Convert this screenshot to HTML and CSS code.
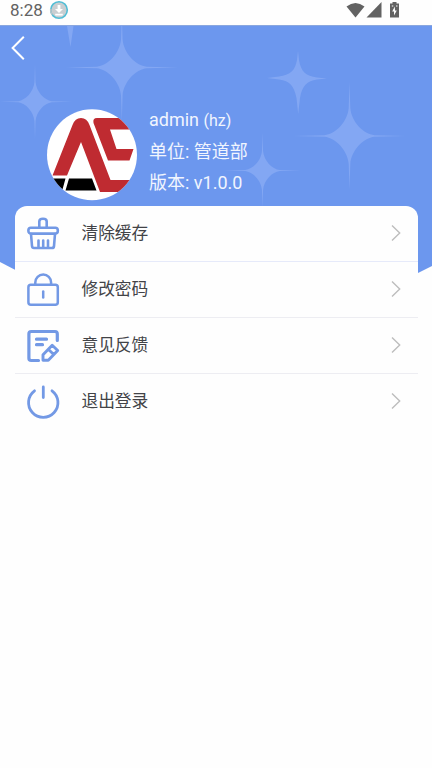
FILE: index.html
```html
<!DOCTYPE html>
<html lang="zh-CN">
<head>
<meta charset="utf-8">
<title>admin</title>
<link rel="stylesheet" href="styles.css">
</head>
<body>
<div class="screen">
  <header class="status">
    <span class="clock">8:28</span>
    <svg class="download" width="20" height="20" viewBox="0 0 20 20"><circle cx="10" cy="10" r="8.3" fill="#c9ced1" stroke="#52bdd5" stroke-width="1.6"/><path d="M3.2 14.8A8.3 8.3 0 0 1 1.7 9" fill="none" stroke="#b9c4c8" stroke-width="1.6"/><path d="M8.6 5h2.8v4h2.6l-4 4-4-4h2.6zM6.2 13.8h7.6v1.6H6.2z" fill="#fff"/></svg>
    <svg class="signals" width="54" height="18" viewBox="0 0 54 18"><g fill="#626262"><path d="M.5 5.600Q9.500-1.400 18.500 5.600L9.500 16.500z"/><path d="M35.500 1v15.500H20.500z"/><path d="M44 2.500h2.500V1h4v1.500H53v14H44z"/></g><path d="M48.800 5.500l-2.600 5h1.800v4l2.800-5H49zM45.800 4.500h1.500v1h-1.500zM50 4.500h1.500v1H50z" fill="#fff"/></svg>
  </header>
  <main class="page">
    <svg class="backdrop" width="432" height="350" viewBox="0 25 432 350">
      <defs>
        <path id="star" d="M0-54L.8-28C2-14 14-2 25-.8L56 0 25 .8C14 2 2 14 .8 28L0 54-.8 28C-2 14-14 2-25 .8L-56 0-25-.8C-14-2-2-14-.8-28z"/>
      </defs>
      <path d="M0 25H432V266L216 374 0 262z" fill="#6c97ee"/>
      <path d="M0 25.500H432" stroke="#8aa7df"/>
      <g fill="#83a7f3">
        <use href="#star" transform="translate(121.800 67.500)"/>
        <use href="#star" transform="translate(35 101.700) scale(.67 .7)"/>
        <use href="#star" transform="translate(349.500 136)"/>
        <use href="#star" transform="translate(262.500 170.500) scale(.69 .7)"/>
        <path d="M298 51L299 60C301 72 306 76 317 77.500L327 78.500 317 79.500C307 81 302 86 300 98L298.200 114 296.500 98C294 86 290 81 279 79.500L267 78 279 76.500C290 75 295 71 297 60z"/>
        <path d="M67 26H73.500L70.500 47z"/>
      </g>
    </svg>
    <svg class="back" width="16" height="26" viewBox="0 0 16 26"><path d="M13.800 1.700L2.600 13 13.800 24.200" fill="none" stroke="#fff" stroke-width="2"/></svg>
    <section class="profile">
      <svg class="avatar" width="90" height="92" viewBox="0 0 90 92">
        <defs><clipPath id="round"><ellipse cx="45" cy="45.800" rx="45" ry="45.500"/></clipPath></defs>
        <g clip-path="url(#round)">
          <path fill="#fff" d="M0 0h90v92H0z"/>
          <path fill="#bf2b31" d="M5.500 66.500L25.500 16Q28 9 34 9Q40 9 42.500 16L63.500 71H90V83H53L34 33 20 66.500z"/>
          <path fill="#bf2b31" d="M50 9H90V20.500H63L69.500 40H86.500L82.500 51.500H61L46.500 14Q45.500 9 50 9z"/>
          <path fill="#000" d="M4 69.500H18.500L15.500 80.500H0V69.500zM22 69.500H45L49.500 81.500H18.500z"/>
        </g>
      </svg>
      <div class="info">
        <div>admin <small>(hz)</small></div>
        <div>单位: 管道部</div>
        <div>版本: v1.0.0</div>
      </div>
    </section>
    <nav class="menu">
      <a class="row">
        <svg class="icon" width="34" height="34" viewBox="0 0 34 34"><g fill="none" stroke="#7399e5" stroke-width="2.600" stroke-linejoin="round" stroke-linecap="round"><path d="M13.300 10.500V4.500Q13.300 1.800 17 1.800T20.700 4.500V10.500"/><rect x="2.400" y="10.800" width="29.400" height="5.800" rx="2.500" fill="#fff"/><path d="M5 17L6 29Q6.200 31 8 31H26Q27.800 31 28 29L29 17M12.500 23.500V29.500M17.200 23.500V29.500M22 23.500V29.500"/></g></svg>
        <span class="label">清除缓存</span>
        <svg class="arrow" width="12" height="18" viewBox="0 0 12 18"><path d="M2 1.500L9.700 9 2 16.500"/></svg>
      </a>
      <a class="row">
        <svg class="icon" width="34" height="34" viewBox="0 0 34 34"><g fill="none" stroke="#7399e5" stroke-width="2.500" stroke-linecap="round"><rect x="2.400" y="11.800" width="29.400" height="20" rx="2.500"/><path d="M9.300 11.500V9.500a7.900 7.900 0 0 1 15.800 0V11.500"/><path d="M17.200 18.500V24.500"/></g></svg>
        <span class="label">修改密码</span>
        <svg class="arrow" width="12" height="18" viewBox="0 0 12 18"><path d="M2 1.500L9.700 9 2 16.500"/></svg>
      </a>
      <a class="row">
        <svg class="icon" width="34" height="34" viewBox="0 0 34 34"><g fill="none" stroke="#7399e5" stroke-width="3.200" stroke-linecap="round" stroke-linejoin="round"><path d="M12.500 31.500H5.200Q2.900 31.500 2.900 29.300V4.800Q2.900 2.500 5.200 2.500H29Q31.300 2.500 31.300 4.800V11.500M10.500 10.200H20.500M10.500 15.700H16.500"/><path d="M17 25.800L26.200 16.300 31.700 21.500 22.300 31.300H17zM22.800 20.800L27.500 25.200" stroke-width="2.900"/></g></svg>
        <span class="label">意见反馈</span>
        <svg class="arrow" width="12" height="18" viewBox="0 0 12 18"><path d="M2 1.500L9.700 9 2 16.500"/></svg>
      </a>
      <a class="row">
        <svg class="icon" width="34" height="34" viewBox="0 0 34 34"><path d="M8.500 5.800A14.700 14.700 0 1 0 26 5.800M17.300 2V12.500" fill="none" stroke="#7399e5" stroke-width="2.800" stroke-linecap="round"/></svg>
        <span class="label">退出登录</span>
        <svg class="arrow" width="12" height="18" viewBox="0 0 12 18"><path d="M2 1.500L9.700 9 2 16.500"/></svg>
      </a>
    </nav>
  </main>
</div>
</body>
</html>
```
FILE: styles.css
```css
* { box-sizing: border-box; }
body {
  margin: 0;
  background: #fefefe;
  font-family: Roboto, "Noto Sans CJK SC", sans-serif;
}
.screen { width: 432px; height: 768px; overflow: hidden; }
.status {
  height: 25px;
  display: flex;
  align-items: flex-start;
  padding: 0 32px 0 10px;
  color: #626262;
}
.clock { width: 33px; font-size: 17px; line-height: 21px; white-space: nowrap; }
.download { margin-left: 6px; }
.signals { margin: 1px 0 0 auto; }
.page {
  position: relative;
  height: 743px;
  padding: 10px 14px 0 15px;
}
.backdrop { position: absolute; left: 0; top: 0; }
.back { position: relative; display: block; margin-left: -5px; }
.profile {
  position: relative;
  display: flex;
  height: 145px;
  padding: 48px 0 0 32px;
}
.avatar { flex: none; }
.info {
  margin: -5px 0 0 12px;
  color: #f1f5fe;
  font-size: 18px;
  line-height: 31px;
  white-space: nowrap;
}
.info small { font-size: 16px; }
.menu {
  position: relative;
  background: #fefefe;
  border-radius: 12px 12px 0 0;
}
.row {
  display: flex;
  align-items: center;
  height: 56px;
  padding: 0 16px 0 11px;
  border-bottom: 1px solid #ededf2;
}
.row:first-child { border-color: #e6eafa; }
.row:last-child { border-color: transparent; }
.icon { flex: none; }
.label { margin-left: 21.500px; font-size: 16.700px; line-height: 24px; color: #424347; }
.arrow { margin: -2px 0 0 auto; fill: none; stroke: #bdbdbd; stroke-width: 1.400; }
```
